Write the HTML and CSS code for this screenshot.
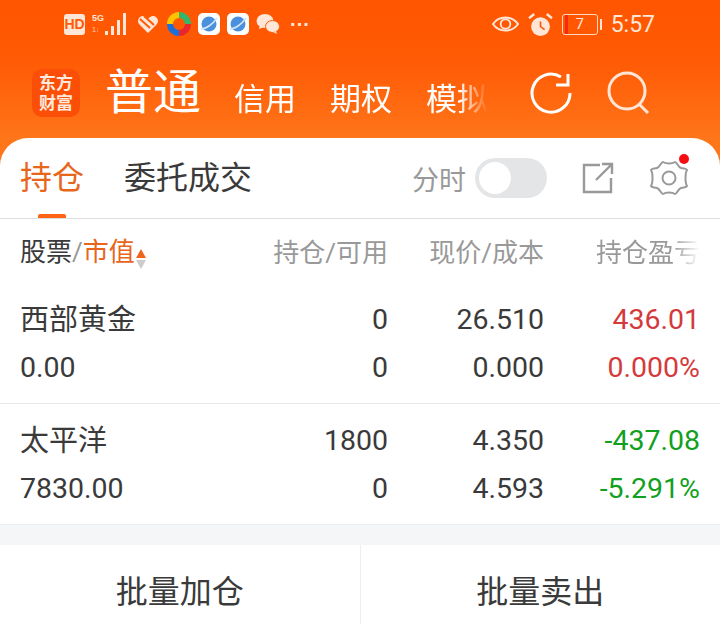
FILE: index.html
```html
<!DOCTYPE html>
<html lang="zh-CN">
<head>
  <meta charset="UTF-8">
  <title>持仓</title>
  <link rel="stylesheet" href="styles.css">
</head>
<body>
<div class="app">
  <header class="top">
    <div class="status">
      <div class="status__left">
        <span class="hd">HD</span>
        <span class="net"><span class="net__g">5G</span><span class="net__s">1↓</span></span>
        <svg class="bars" width="24" height="24" viewBox="0 0 24 24"><g fill="#ffe6d6"><rect x="0" y="19" width="3" height="4"/><rect x="6" y="14" width="3" height="9"/><rect x="12" y="8" width="3" height="15"/><rect x="18" y="1" width="3" height="22"/></g></svg>
        <svg class="ico-heart" width="24" height="22" viewBox="0 0 24 22"><path d="M12 20 3 11a5 5 0 0 1 8-6l1 1 1-1a5 5 0 0 1 8 6z" fill="#ffe6d6"/><path d="M4 6l10 9M8 3l10 9" stroke="#ff5a08" stroke-width="2" fill="none"/></svg>
        <svg class="ico-wheel" width="24" height="24" viewBox="0 0 24 24" fill="none" stroke-width="6"><path d="M3 12A9 9 0 0 1 12 3" stroke="#ffc400"/><path d="M12 3a9 9 0 0 1 9 9" stroke="#35b56a"/><path d="M21 12a9 9 0 0 1-9 9" stroke="#e8262e"/><path d="M12 21a9 9 0 0 1-9-9" stroke="#1d6fd8"/></svg>
        <svg class="ico-app" width="22" height="22" viewBox="0 0 22 22"><rect width="22" height="22" rx="5" fill="#fff"/><circle cx="11" cy="11" r="7.5" fill="#4a90dc"/><path d="M3 16c5 0 12-5 16-11" stroke="#cfe4f8" stroke-width="1.6" fill="none"/></svg>
        <svg class="ico-app" width="22" height="22" viewBox="0 0 22 22"><rect width="22" height="22" rx="5" fill="#fff"/><circle cx="11" cy="11" r="7.5" fill="#4a90dc"/><path d="M3 16c5 0 12-5 16-11" stroke="#cfe4f8" stroke-width="1.6" fill="none"/></svg>
        <svg class="ico-chat" width="24" height="22" viewBox="0 0 24 22"><ellipse cx="9" cy="8" rx="8.500" ry="7" fill="#ffe6d6"/><path d="M4 12l-1 4 5-2z" fill="#ffe6d6"/><ellipse cx="16.500" cy="13.500" rx="7" ry="6" fill="#ffe6d6" stroke="#ff5a08"/><path d="M20 18l1 3-4-2z" fill="#ffe6d6"/></svg>
        <span class="more">···</span>
      </div>
      <div class="status__right">
        <svg width="27" height="22" viewBox="0 0 28 22" fill="none" stroke="#ffe6d6" stroke-width="2"><path d="M1 11C7 2 21 2 27 11 21 20 7 20 1 11z"/><circle cx="14" cy="11" r="5"/></svg>
        <svg width="25" height="25" viewBox="0 0 24 24"><circle cx="12" cy="14" r="9" fill="#ffe6d6"/><path d="M12 9v5l4 3" stroke="#ff5a08" stroke-width="1.6" fill="none"/><path d="M1 6l5-4M23 6l-5-4" stroke="#ffe6d6" stroke-width="2.400"/></svg>
        <span class="batt"><span class="batt__box">7</span><span class="batt__tip"></span></span>
        <span class="time">5:57</span>
      </div>
    </div>
    <div class="nav">
      <div class="logo">东方<br>财富</div>
      <span class="nav__main">普通</span>
      <div class="nav__tabs">
        <span>信用</span>
        <span>期权</span>
        <span>模拟</span>
      </div>
      <div class="nav__icons">
        <svg width="44" height="44" viewBox="0 0 44 44" fill="none" stroke="#fff" stroke-width="3"><path d="M40 22A19 19 0 1 1 31 6"/><path d="M38 3v11H26"/></svg>
        <svg width="44" height="44" viewBox="0 0 44 44" fill="none" stroke="#ffe6d6" stroke-width="3"><circle cx="20" cy="20" r="18"/><path d="M32 33l9 9"/></svg>
      </div>
    </div>
  </header>

  <main class="card">
    <div class="tabs">
      <div class="tab tab--on">持仓</div>
      <div class="tab">委托成交</div>
      <div class="tabs__right">
        <span class="tabs__label">分时</span>
        <span class="switch"><span class="switch__knob"></span></span>
        <svg class="ico-share" width="32" height="32" viewBox="0 0 32 32" fill="none" stroke="#999" stroke-width="2.400"><path d="M18 3H2v27h27V16"/><path d="M14 18 30 2M20 2h10v10"/></svg>
        <span class="gear">
          <svg width="38" height="36" viewBox="0 0 38 36" fill="none" stroke="#999" stroke-width="2"><path d="M13 2c3 2 9 2 12 0 2 0 3 5 6 6 3 1 5 0 6 2-2 3-2 13 0 16-1 2-3 1-6 2-3 1-4 6-6 6-3-2-9-2-12 0-2 0-3-5-6-6-3-1-5 0-6-2 2-3 2-13 0-16 1-2 3-1 6-2 3-1 4-6 6-6z"/><circle cx="19" cy="18" r="6.500"/></svg>
          <span class="gear__dot"></span>
        </span>
      </div>
    </div>

    <div class="grid grid--head">
      <div class="head-first">股票<span class="slash">/</span><span class="sort">市值</span><span class="arrows"><i class="up"></i><i class="down"></i></span></div>
      <div>持仓/可用</div>
      <div>现价/成本</div>
      <div class="fade">持仓盈亏</div>
    </div>

    <div class="grid row">
      <div class="name">西部黄金</div><div>0</div><div>26.510</div><div class="red">436.01</div>
      <div>0.00</div><div>0</div><div>0.000</div><div class="red">0.000%</div>
    </div>
    <div class="grid row row--last">
      <div class="name">太平洋</div><div>1800</div><div>4.350</div><div class="green">-437.08</div>
      <div>7830.00</div><div>0</div><div>4.593</div><div class="green">-5.291%</div>
    </div>
  </main>

  <footer class="foot">
    <div class="foot__btn">批量加仓</div>
    <div class="foot__btn">批量卖出</div>
  </footer>
</div>
</body>
</html>
```

FILE: styles.css
```css
* {
  box-sizing: border-box;
}
html, body {
  margin: 0;
  padding: 0;
}
body {
  width: 720px;
  height: 624px;
  overflow: hidden;
  font-family: Roboto, "Noto Sans CJK SC", sans-serif;
  color: #3a3a3a;
  background: #fff;
}
.app {
  display: flex;
  flex-direction: column;
  height: 624px;
  background: linear-gradient(#ff5500 0, #ff5a05 60px, #ff7519 138px, #ff7519 166px);
}

/* status bar */
.top {
  height: 138px;
  flex: none;
}
.status {
  height: 48px;
  display: flex;
  justify-content: space-between;
  align-items: center;
  padding: 0 65px 0 64px;
  color: #ffe6d6;
}
.status__left, .status__right {
  display: flex;
  align-items: center;
}
.status__left {
  gap: 7px;
}
.status__right {
  gap: 9px;
}
.hd {
  width: 21px;
  height: 21px;
  border-radius: 3px;
  background: #ffe6d6;
  color: #ff5a08;
  font: 700 14px/21px "Liberation Sans", sans-serif;
  text-align: center;
}
.net {
  display: flex;
  flex-direction: column;
  width: 12px;
  margin-right: -6px;
  font: 700 9px/11px "Liberation Sans", sans-serif;
}
.net__s {
  font-size: 7px;
  opacity: 0.6;
}
.more {
  margin-left: 3px;
  font: 700 20px/22px "Liberation Sans", sans-serif;
}
.batt {
  display: flex;
  align-items: center;
  gap: 2px;
}
.batt__box {
  width: 36px;
  height: 21px;
  border: 1.5px solid #ffd9bf;
  border-radius: 3px;
  font-size: 15px;
  line-height: 18px;
  text-align: center;
  color: #ffe6d6;
  background: linear-gradient(90deg, transparent 2px, #f52a10 2px, #f52a10 5px, transparent 5px);
}
.batt__tip {
  width: 2px;
  height: 11px;
  background: #ffe6d6;
}
.time {
  font-size: 23px;
}

/* app nav */
.nav {
  display: flex;
  align-items: center;
  height: 90px;
  padding-left: 32px;
  color: #fff;
}
.logo {
  width: 48px;
  height: 48px;
  border-radius: 10px;
  background: #fb4f08;
  color: #ffe9dc;
  font-size: 17px;
  font-weight: 700;
  line-height: 20px;
  text-align: center;
  padding-top: 4px;
  flex: none;
}
.nav__main {
  flex: none;
  margin-left: 25px;
  font-size: 48px;
  line-height: 60px;
}
.nav__tabs {
  flex: none;
  display: flex;
  gap: 34px;
  width: 262px;
  margin: 14px 0 0 33px;
  font-size: 31px;
  line-height: 44px;
  white-space: nowrap;
  -webkit-mask-image: linear-gradient(90deg, #000 225px, transparent 254px);
  mask-image: linear-gradient(90deg, #000 225px, transparent 254px);
}
.nav__icons {
  flex: none;
  display: flex;
  gap: 33px;
  margin-left: 34px;
}

/* card */
.card {
  flex: none;
  height: 387px;
  background: #fff;
  border-radius: 28px 28px 0 0;
  border-bottom: 1px solid #eceef0;
}
.tabs {
  height: 81px;
  display: flex;
  align-items: center;
  padding: 0 32px 0 20px;
  border-bottom: 1px solid #ddd;
  gap: 40px;
}
.tab {
  position: relative;
  font-size: 32px;
  line-height: 80px;
}
.tab--on {
  color: #e8651c;
}
.tab--on::after {
  content: "";
  position: absolute;
  left: 18px;
  bottom: 0;
  width: 28px;
  height: 4px;
  border-radius: 2px 2px 0 0;
  background: #ff6414;
}
.tabs__right {
  display: flex;
  align-items: center;
  margin-left: auto;
}
.tabs__label {
  font-size: 27px;
  color: #999;
}
.switch {
  width: 72px;
  height: 40px;
  margin-left: 9px;
  padding: 4px;
  border-radius: 20px;
  background: #e4e5e7;
}
.switch__knob {
  display: block;
  width: 32px;
  height: 32px;
  border-radius: 50%;
  background: #fff;
}
.ico-share {
  margin-left: 35px;
}
.gear {
  position: relative;
  display: block;
  height: 36px;
  margin-left: 36px;
}
.gear__dot {
  position: absolute;
  top: -6px;
  right: -1px;
  width: 10px;
  height: 10px;
  border-radius: 50%;
  background: #f50d12;
}

/* table */
.grid {
  display: grid;
  grid-template-columns: 1fr 130px 156px 156px;
  align-content: start;
  padding: 0 20px;
  text-align: right;
}
.grid > div:nth-child(4n + 1) {
  text-align: left;
}
.grid--head {
  height: 68px;
  align-items: center;
  padding-bottom: 6px;
  align-content: center;
  font-size: 26px;
  color: #999;
}
.head-first {
  color: #3a3a3a;
}
.slash {
  color: #999;
}
.sort {
  color: #e8651c;
}
.arrows {
  display: inline-flex;
  flex-direction: column;
  gap: 2px;
  margin-left: 1px;
  vertical-align: 3px;
}
.arrows i {
  display: block;
  border-left: 5px solid transparent;
  border-right: 5px solid transparent;
}
.arrows .up {
  border-bottom: 9px solid #f0641e;
}
.arrows .down {
  border-top: 9px solid #ccc;
}
.fade {
  -webkit-mask-image: linear-gradient(90deg, #000 128px, transparent 156px);
  mask-image: linear-gradient(90deg, #000 128px, transparent 156px);
}
.row {
  height: 117px;
  padding-top: 9px;
  font-size: 28.5px;
  line-height: 48px;
  border-bottom: 1px solid #e8e8e8;
}
.row--last {
  height: 120px;
  padding-top: 13px;
  border-bottom: 0;
}
.name {
  font-size: 29px;
}
.red {
  color: #d43a3c;
}
.green {
  color: #12a01e;
}

/* bottom buttons */
.foot {
  flex: 1;
  display: flex;
  border-top: 20px solid #f5f6f8;
  background: #fff;
}
.foot__btn {
  flex: 1;
  font-size: 32px;
  line-height: 94px;
  text-align: center;
}
.foot__btn + .foot__btn {
  border-left: 1px solid #eee;
}
```
